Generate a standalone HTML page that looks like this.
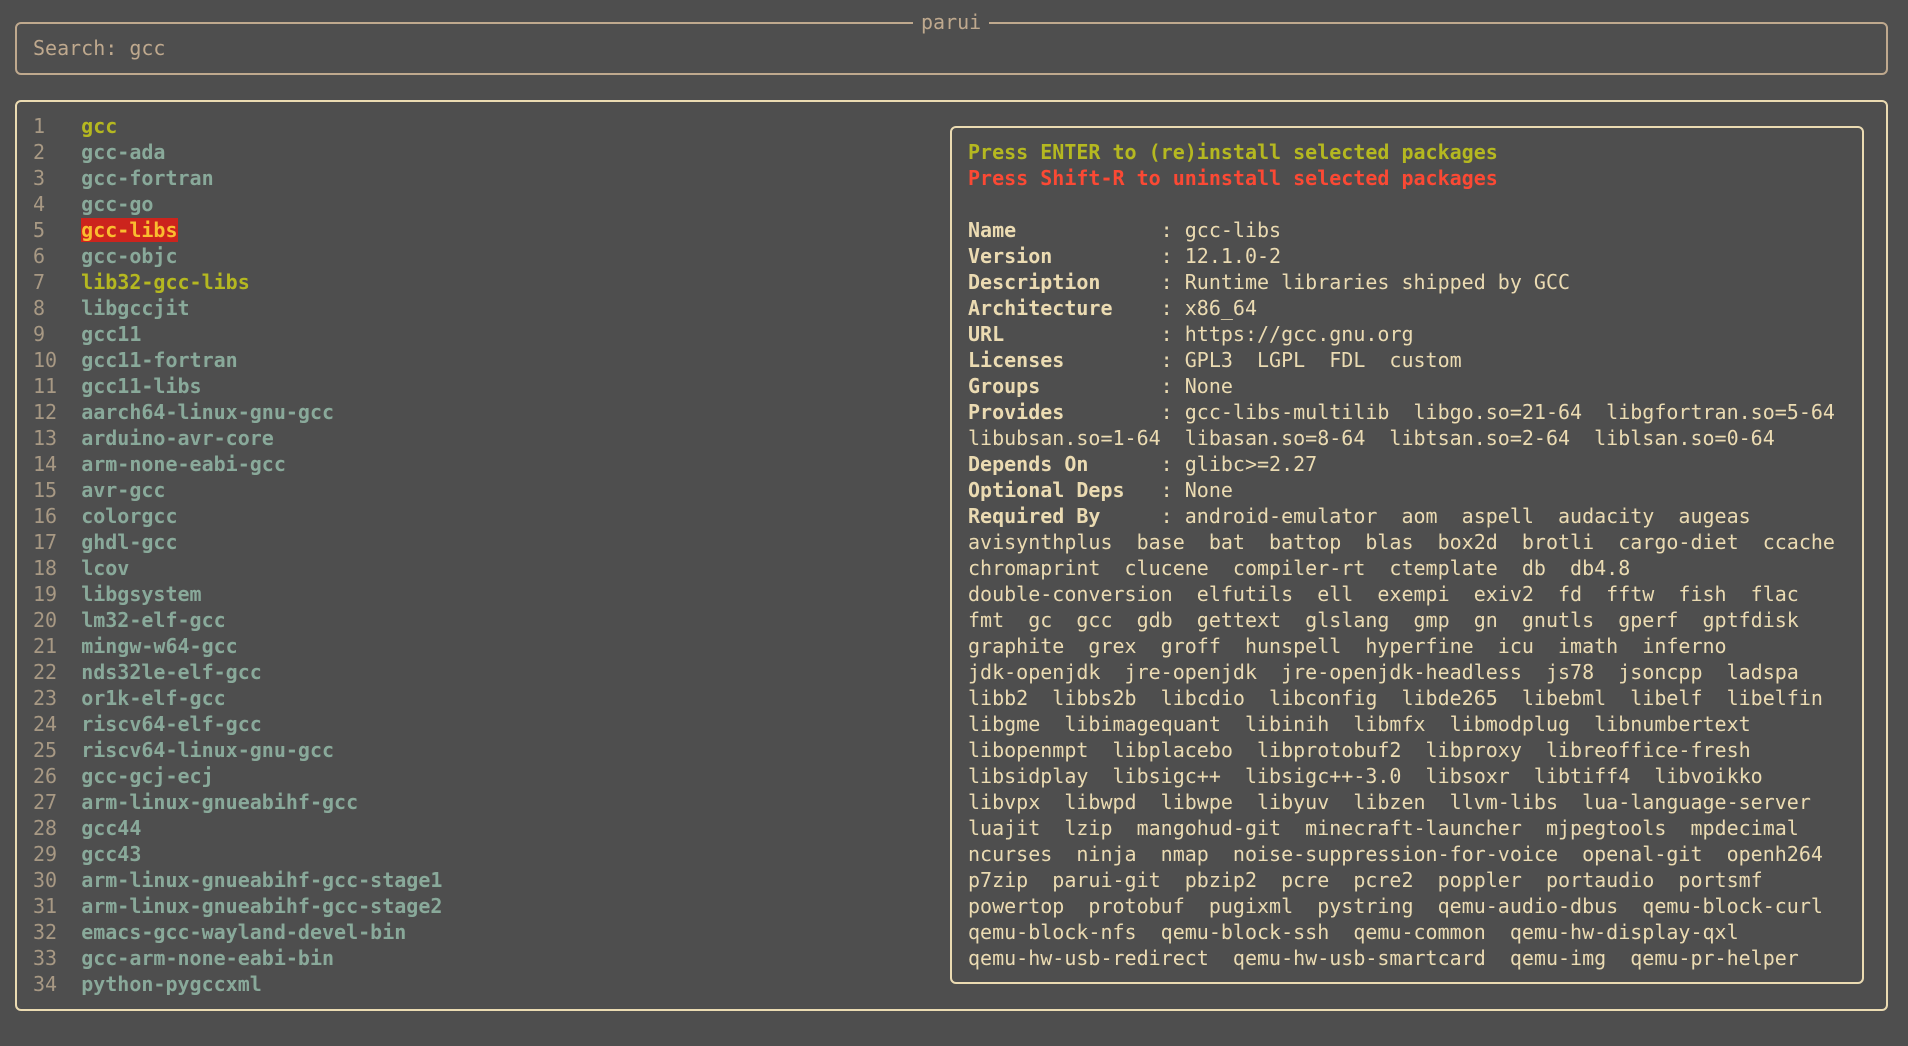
<!DOCTYPE html>
<html><head><meta charset="utf-8"><style>
body{margin:0;width:1908px;height:1046px;background:#4e4e4e;overflow:hidden;font-family:"DejaVu Sans Mono","Liberation Mono",monospace;font-size:20px;}
.box{position:absolute;border:2px solid #ebdbb2;border-radius:6px;box-sizing:border-box}
pre{position:absolute;margin:0;font:inherit;line-height:26px;white-space:pre}
.n{color:#a89984}
.p{color:#89a99a;font-weight:bold}
.y{color:#b5b820;font-weight:bold}
.sel{background:#cc241d;color:#fabd2f;font-weight:bold}
.r{color:#fb4934;font-weight:bold}
.k{color:#ebdbb2;font-weight:bold}
.v{color:#ebdbb2}
</style></head><body>
<div class="box" style="left:15px;top:22px;width:1873px;height:53px;border-color:#bfa98e"></div>
<div style="position:absolute;left:913px;top:9px;background:#4e4e4e;color:#bfa98e;padding:0 8px;line-height:26px">parui</div>
<pre style="left:33px;top:35px;color:#bfa98e">Search: gcc</pre>
<div class="box" style="left:15px;top:100px;width:1873px;height:911px"></div>
<pre style="left:33px;top:113px"><span class="n">1</span>   <span class="y">gcc</span>
<span class="n">2</span>   <span class="p">gcc-ada</span>
<span class="n">3</span>   <span class="p">gcc-fortran</span>
<span class="n">4</span>   <span class="p">gcc-go</span>
<span class="n">5</span>   <span class="sel">gcc-libs</span>
<span class="n">6</span>   <span class="p">gcc-objc</span>
<span class="n">7</span>   <span class="y">lib32-gcc-libs</span>
<span class="n">8</span>   <span class="p">libgccjit</span>
<span class="n">9</span>   <span class="p">gcc11</span>
<span class="n">10</span>  <span class="p">gcc11-fortran</span>
<span class="n">11</span>  <span class="p">gcc11-libs</span>
<span class="n">12</span>  <span class="p">aarch64-linux-gnu-gcc</span>
<span class="n">13</span>  <span class="p">arduino-avr-core</span>
<span class="n">14</span>  <span class="p">arm-none-eabi-gcc</span>
<span class="n">15</span>  <span class="p">avr-gcc</span>
<span class="n">16</span>  <span class="p">colorgcc</span>
<span class="n">17</span>  <span class="p">ghdl-gcc</span>
<span class="n">18</span>  <span class="p">lcov</span>
<span class="n">19</span>  <span class="p">libgsystem</span>
<span class="n">20</span>  <span class="p">lm32-elf-gcc</span>
<span class="n">21</span>  <span class="p">mingw-w64-gcc</span>
<span class="n">22</span>  <span class="p">nds32le-elf-gcc</span>
<span class="n">23</span>  <span class="p">or1k-elf-gcc</span>
<span class="n">24</span>  <span class="p">riscv64-elf-gcc</span>
<span class="n">25</span>  <span class="p">riscv64-linux-gnu-gcc</span>
<span class="n">26</span>  <span class="p">gcc-gcj-ecj</span>
<span class="n">27</span>  <span class="p">arm-linux-gnueabihf-gcc</span>
<span class="n">28</span>  <span class="p">gcc44</span>
<span class="n">29</span>  <span class="p">gcc43</span>
<span class="n">30</span>  <span class="p">arm-linux-gnueabihf-gcc-stage1</span>
<span class="n">31</span>  <span class="p">arm-linux-gnueabihf-gcc-stage2</span>
<span class="n">32</span>  <span class="p">emacs-gcc-wayland-devel-bin</span>
<span class="n">33</span>  <span class="p">gcc-arm-none-eabi-bin</span>
<span class="n">34</span>  <span class="p">python-pygccxml</span></pre>
<div class="box" style="left:950px;top:126px;width:914px;height:858px"></div>
<pre style="left:968px;top:139px" class="v"><span class="y">Press ENTER to (re)install selected packages</span>
<span class="r">Press Shift-R to uninstall selected packages</span>

<span class="k">Name</span>            : gcc-libs
<span class="k">Version</span>         : 12.1.0-2
<span class="k">Description</span>     : Runtime libraries shipped by GCC
<span class="k">Architecture</span>    : x86_64
<span class="k">URL</span>             : https://gcc.gnu.org
<span class="k">Licenses</span>        : GPL3  LGPL  FDL  custom
<span class="k">Groups</span>          : None
<span class="k">Provides</span>        : gcc-libs-multilib  libgo.so=21-64  libgfortran.so=5-64
libubsan.so=1-64  libasan.so=8-64  libtsan.so=2-64  liblsan.so=0-64
<span class="k">Depends On</span>      : glibc>=2.27
<span class="k">Optional Deps</span>   : None
<span class="k">Required By</span>     : android-emulator  aom  aspell  audacity  augeas
avisynthplus  base  bat  battop  blas  box2d  brotli  cargo-diet  ccache
chromaprint  clucene  compiler-rt  ctemplate  db  db4.8
double-conversion  elfutils  ell  exempi  exiv2  fd  fftw  fish  flac
fmt  gc  gcc  gdb  gettext  glslang  gmp  gn  gnutls  gperf  gptfdisk
graphite  grex  groff  hunspell  hyperfine  icu  imath  inferno
jdk-openjdk  jre-openjdk  jre-openjdk-headless  js78  jsoncpp  ladspa
libb2  libbs2b  libcdio  libconfig  libde265  libebml  libelf  libelfin
libgme  libimagequant  libinih  libmfx  libmodplug  libnumbertext
libopenmpt  libplacebo  libprotobuf2  libproxy  libreoffice-fresh
libsidplay  libsigc++  libsigc++-3.0  libsoxr  libtiff4  libvoikko
libvpx  libwpd  libwpe  libyuv  libzen  llvm-libs  lua-language-server
luajit  lzip  mangohud-git  minecraft-launcher  mjpegtools  mpdecimal
ncurses  ninja  nmap  noise-suppression-for-voice  openal-git  openh264
p7zip  parui-git  pbzip2  pcre  pcre2  poppler  portaudio  portsmf
powertop  protobuf  pugixml  pystring  qemu-audio-dbus  qemu-block-curl
qemu-block-nfs  qemu-block-ssh  qemu-common  qemu-hw-display-qxl
qemu-hw-usb-redirect  qemu-hw-usb-smartcard  qemu-img  qemu-pr-helper</pre>
</body></html>
